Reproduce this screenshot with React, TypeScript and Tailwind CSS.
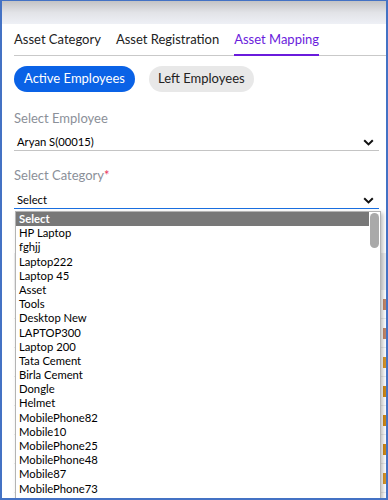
import { useState } from 'react';

const tabs = ['Asset Category', 'Asset Registration', 'Asset Mapping'];

const categories = [
    'Select',
    'HP Laptop',
    'fghjj',
    'Laptop222',
    'Laptop 45',
    'Asset',
    'Tools',
    'Desktop New',
    'LAPTOP300',
    'Laptop 200',
    'Tata Cement',
    'Birla Cement',
    'Dongle',
    'Helmet',
    'MobilePhone82',
    'Mobile10',
    'MobilePhone25',
    'MobilePhone48',
    'Mobile87',
    'MobilePhone73',
];

const marks = ['#c4876a', '#c4876a', '#d8962a', '#d08a18', '#d08a18', '#d08a18', '#d8962a'];

function Chevron() {
    return (
        <svg width="11" height="7" viewBox="0 0 11 7" className="shrink-0">
            <path d="M1.2 1.2 L5.5 5.4 L9.8 1.2" fill="none" stroke="#111" strokeWidth="2" />
        </svg>
    );
}

export default function App() {
    const [tab] = useState(2);
    const [active, setActive] = useState(true);

    return (
        <div className="w-[388px] h-[500px] overflow-hidden bg-white border-x-2 border-t border-b-2 border-[#4472c4] font-['Lato','Noto_Sans',sans-serif]">
            <div className="h-[23px] bg-gradient-to-b from-[#c3c3c5] via-[#e2e3e7] to-[#eef0f6]" />

            <div className="pl-3">
                {/* tabs */}
                <div className="flex gap-[15px] border-b border-[#c9c9c9]">
                    {tabs.map((t, i) => (
                        <div
                            key={t}
                            className={
                                'pt-[7px] pb-[6px] -mb-px border-b-2 text-[13px] leading-[17px] ' +
                                (i === tab ? 'border-[#6a1bdc] text-[#6a1bdc]' : 'border-transparent text-[#222]')
                            }
                        >
                            {t}
                        </div>
                    ))}
                </div>

                {/* employee status */}
                <div className="flex gap-[14px] mt-[10px]">
                    <button
                        onClick={() => setActive(true)}
                        className={
                            'h-[26px] px-[10px] rounded-full text-[13px] ' +
                            (active ? 'bg-[#0a62e6] text-white' : 'bg-[#e8e8e8] text-[#222]')
                        }
                    >
                        Active Employees
                    </button>
                    <button
                        onClick={() => setActive(false)}
                        className={
                            'h-[26px] px-[9px] rounded-full text-[13px] ' +
                            (!active ? 'bg-[#0a62e6] text-white' : 'bg-[#e8e8e8] text-[#222]')
                        }
                    >
                        Left Employees
                    </button>
                </div>

                {/* employee */}
                <div className="w-[365px]">
                    <div className="mt-[18px] text-[13px] leading-[17px] text-[#8b9099]">Select Employee</div>
                    <div className="mt-[7px] h-[17px] flex items-center justify-between pl-[3px] pr-[5px] border-b border-[#c4c4c4] text-[11.25px] text-black">
                        <span>Aryan S(00015)</span>
                        <Chevron />
                    </div>

                    <div className="mt-[16px] text-[13px] leading-[17px] text-[#8b9099]">
                        Select Category<span className="text-[#e8365d]">*</span>
                    </div>
                    <div className="relative">
                        <div className="mt-[8px] h-[17px] flex items-center justify-between pl-[3px] pr-[5px] border-b border-[#1a6fe0] text-[11.25px] text-black">
                            <span>Select</span>
                            <Chevron />
                        </div>

                        {/* open dropdown list */}
                        <div className="absolute z-10 left-[1px] top-[19px] w-[366px] h-[288px] bg-white border border-[#b4b4b4] shadow-[2px_2px_4px_rgba(0,0,0,0.25)] flex">
                            <div className="flex-1">
                                {categories.map((c, i) => (
                                    <div
                                        key={c}
                                        className={
                                            'h-[14.2px] leading-[14.2px] px-[3px] text-[11.25px] ' +
                                            (i === 0 ? 'bg-[#787878] text-white font-bold' : 'text-black')
                                        }
                                    >
                                        {c}
                                    </div>
                                ))}
                            </div>
                            <div className="w-[11px] pt-[1px] px-[1px]">
                                <div className="h-[35px] rounded-full bg-[#a9a9a9]" />
                            </div>
                        </div>
                    </div>
                </div>

                {/* mapping table behind the list */}
                <div className="mt-[44px]">
                    <div className="h-[37px] bg-[#eeeef0]" />
                    {marks.map((m, i) => (
                        <div key={i} className="h-[29px] flex items-center justify-end border-b border-[#ececec]">
                            <div className="w-[3px] h-[11px]" style={{ backgroundColor: m }} />
                        </div>
                    ))}
                </div>
            </div>
        </div>
    );
}
